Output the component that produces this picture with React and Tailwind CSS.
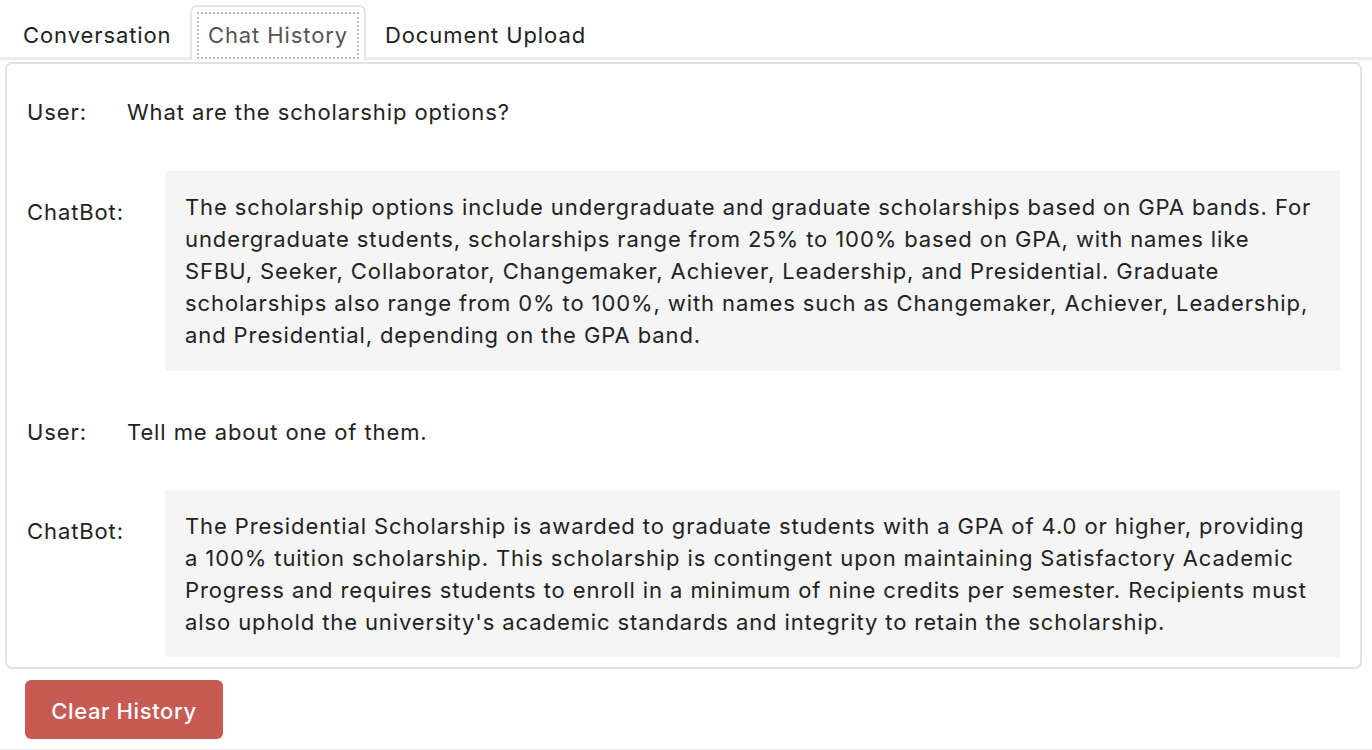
import React from "react";

const font = { fontFamily: "Inter, 'Noto Sans', sans-serif" };

function BotBox({ lines, pb }) {
  return (
    <div className="flex">
      <div className="w-[158px] shrink-0 pl-[20px] pt-[25px] text-[22px] tracking-[0.9px] leading-[32px] text-[#222]">ChatBot:</div>
      <div className={"flex-1 bg-[#f5f5f5] pl-[20px] pr-[20px] pt-[20px] text-[22px] tracking-[0.9px] leading-[32px] text-[#222] " + pb}>
        {lines.map((l, i) => (
          <div key={i} className="whitespace-nowrap">{l}</div>
        ))}
      </div>
    </div>
  );
}

function UserRow({ text }) {
  return (
    <div className="flex text-[22px] tracking-[0.9px] leading-[32px] text-[#222]">
      <div className="w-[120px] shrink-0 pl-[20px]">User:</div>
      <div>{text}</div>
    </div>
  );
}

export default function App() {
  return (
    <div className="w-[1372px] h-[750px] bg-white overflow-hidden relative" style={font}>
      <div className="flex items-end h-[60px] border-b-[3px] border-[#ececec] text-[22px] tracking-[0.9px] text-[#222]">
        <div className="w-[190px] pl-[23px] pb-[6px] leading-[32px]">Conversation</div>
        <div className="w-[176px] h-[55px] mb-[-3px] border-2 border-b-0 border-[#e6e6e6] rounded-t-[7px] bg-white flex items-start pt-[5px] px-[5px]">
          <div className="border-2 border-dotted border-[#bbb] w-full h-[47px] flex items-center justify-center text-[#555] leading-[32px] pb-[1px]">Chat History</div>
        </div>
        <div className="pl-[19px] pb-[6px] leading-[32px]">Document Upload</div>
      </div>
      <div className="ml-[5px] w-[1357px] mt-[2px] h-[607px] border-2 border-[#e2e2e2] rounded-[7px] pr-[20px] pt-[32px]">
        <UserRow text="What are the scholarship options?" />
        <div className="mt-[43px]">
          <BotBox
            pb="pb-[20px]"
            lines={[
              "The scholarship options include undergraduate and graduate scholarships based on GPA bands. For",
              "undergraduate students, scholarships range from 25% to 100% based on GPA, with names like",
              "SFBU, Seeker, Collaborator, Changemaker, Achiever, Leadership, and Presidential. Graduate",
              "scholarships also range from 0% to 100%, with names such as Changemaker, Achiever, Leadership,",
              "and Presidential, depending on the GPA band.",
            ]}
          />
        </div>
        <div className="mt-[45px]">
          <UserRow text="Tell me about one of them." />
        </div>
        <div className="mt-[42px]">
          <BotBox
            pb="pb-[19px]"
            lines={[
              "The Presidential Scholarship is awarded to graduate students with a GPA of 4.0 or higher, providing",
              "a 100% tuition scholarship. This scholarship is contingent upon maintaining Satisfactory Academic",
              "Progress and requires students to enroll in a minimum of nine credits per semester. Recipients must",
              "also uphold the university's academic standards and integrity to retain the scholarship.",
            ]}
          />
        </div>
      </div>
      <div className="pl-[25px] pt-[11px]">
        <button className="w-[198px] h-[59px] rounded-[6px] bg-[#c75b53] text-white text-[22px] tracking-[0.6px] font-medium pt-[3px]">Clear History</button>
      </div>
      <div className="absolute left-0 right-0 bottom-0 h-px bg-[#eeeeee]" />
    </div>
  );
}
